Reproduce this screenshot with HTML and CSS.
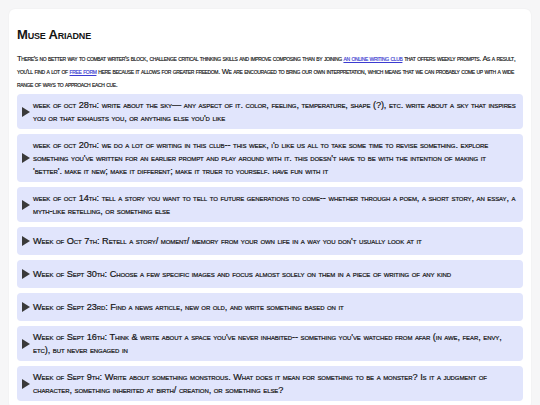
FILE: index.html
```html
<!DOCTYPE html>
<html>
<head>
<meta charset="utf-8">
<link rel="stylesheet" href="styles.css">
</head>
<body>
<div class="card">
  <h1 class="title">Muse Ariadne</h1>
  <p class="intro">There's no better way to combat writer's block, challenge critical thinking skills and improve composing than by joining <a href="#">an online writing club</a> that offers weekly prompts. As a result, you'll find a lot of <a href="#">free form</a> here because it allows for greater freedom. We are encouraged to bring our own interpretation, which means that we can probably come up with a wide range of ways to approach each cue.</p>
  <div class="list">
    <details class="item"><summary class="sum"><span class="tri"></span><span class="txt">week of oct 28th: write about the sky— any aspect of it. color, feeling, temperature, shape (?), etc. write about a sky that inspires you or that exhausts you, or anything else you'd like</span></summary></details>
    <details class="item"><summary class="sum"><span class="tri"></span><span class="txt">week of oct 20th: we do a lot of writing in this club-- this week, i'd like us all to take some time to revise something. explore something you've written for an earlier prompt and play around with it. this doesn't have to be with the intention of making it 'better'. make it new; make it different; make it truer to yourself. have fun with it</span></summary></details>
    <details class="item"><summary class="sum"><span class="tri"></span><span class="txt">week of oct 14th: tell a story you want to tell to future generations to come-- whether through a poem, a short story, an essay, a myth-like retelling, or something else</span></summary></details>
    <details class="item"><summary class="sum"><span class="tri"></span><span class="txt">Week of Oct 7th: Retell a story/ moment/ memory from your own life in a way you don't usually look at it</span></summary></details>
    <details class="item"><summary class="sum"><span class="tri"></span><span class="txt">Week of Sept 30th: Choose a few specific images and focus almost solely on them in a piece of writing of any kind</span></summary></details>
    <details class="item"><summary class="sum"><span class="tri"></span><span class="txt">Week of Sept 23rd: Find a news article, new or old, and write something based on it</span></summary></details>
    <details class="item"><summary class="sum"><span class="tri"></span><span class="txt">Week of Sept 16th: Think &amp; write about a space you've never inhabited-- something you've watched from afar (in awe, fear, envy, etc), but never engaged in</span></summary></details>
    <details class="item"><summary class="sum"><span class="tri"></span><span class="txt">Week of Sept 9th: Write about something monstrous. What does it mean for something to be a monster? Is it a judgment of character, something inherited at birth/ creation, or something else?</span></summary></details>
  </div>
</div>
</body>
</html>
```

FILE: styles.css
```css
html, body {
  margin: 0;
  padding: 0;
}
body {
  background: #f6f6f7;
  padding: 9px 9px 0 9px;
  font-family: "Liberation Sans", Arial, sans-serif;
  color: #141414;
}
.card {
  background: #ffffff;
  border-radius: 6px;
  padding: 8px 8px 8px 8px;
  box-shadow: 0 0 2px rgba(0,0,0,0.06);
}
.title {
  margin: 8px 0 0 0;
  font-size: 13px;
  line-height: 20px;
  font-weight: bold;
  font-variant: small-caps;
  letter-spacing: -0.2px;
}
.intro {
  margin: 7px 0 3px 0;
  font-size: 7.6px;
  line-height: 13px;
  font-variant: small-caps;
  font-weight: normal;
  letter-spacing: -0.36px;
  word-spacing: 0;
  -webkit-text-stroke: 0.15px #141414;
}
.intro a {
  color: #3b3bd1;
  -webkit-text-stroke: 0.15px #3b3bd1;
  text-decoration: underline;
}
.list {
  display: flex;
  flex-direction: column;
  gap: 5px;
}
.item {
  background: #e1e5fc;
  border-radius: 4px;
}
.sum {
  list-style: none;
  display: flex;
  align-items: center;
  padding: 4.5px 6px 4.5px 5px;
  min-height: 19px;
  font-size: 9.2px;
  line-height: 13px;
  font-weight: normal;
  font-variant: small-caps;
  letter-spacing: -0.1px;
  word-spacing: 0.2px;
  -webkit-text-stroke: 0.2px #141414;
}
.sum::-webkit-details-marker {
  display: none;
}
.tri {
  flex: none;
  width: 0;
  height: 0;
  border-top: 5px solid transparent;
  border-bottom: 5px solid transparent;
  border-left: 8px solid #3a3a3a;
  margin-right: 3px;
}
.txt {
  flex: 1;
}
```
